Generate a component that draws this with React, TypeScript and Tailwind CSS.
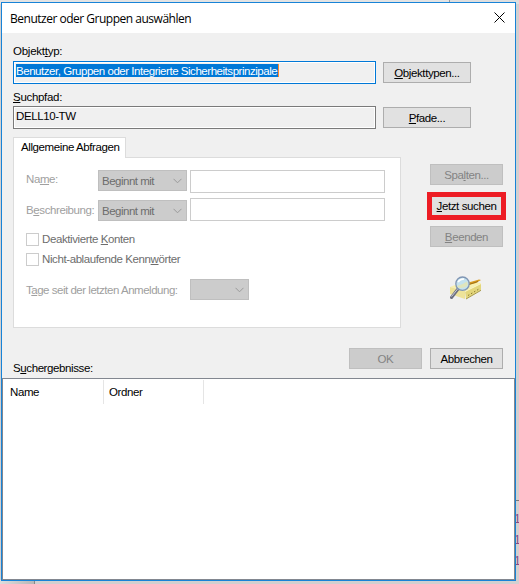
import React from 'react';
import clsx from 'clsx';

interface ButtonProps {
  children: React.ReactNode;
  disabled?: boolean;
  className?: string;
}

function Button({ children, disabled, className }: ButtonProps) {
  return (
    <button
      disabled={disabled}
      className={clsx(
        'flex items-center justify-center h-[21px] border whitespace-nowrap',
        disabled ? 'bg-[#cccccc] border-[#bfbfbf] text-[#838383]' : 'bg-[#e1e1e1] border-[#adadad] text-black',
        className
      )}
    >
      {children}
    </button>
  );
}

// Underlined access key
function Key({ children }: { children: React.ReactNode }) {
  return <span className="underline decoration-1 underline-offset-[1px] [text-decoration-skip-ink:none]">{children}</span>;
}

function Combo({ label, className }: { label?: string; className?: string }) {
  return (
    <div
      className={clsx(
        'flex items-center justify-between h-[21px] pl-[3px] pr-1 bg-[#cccccc] border border-[#bfbfbf] text-[#6d6d6d] tracking-[-0.5px]',
        className
      )}
    >
      <span className="pt-px">{label}</span>
      <svg width="9" height="6" viewBox="0 0 9 6" fill="none" stroke="#9a9a9a">
        <path d="M0.5 0.8L4.5 4.8L8.5 0.8" />
      </svg>
    </div>
  );
}

function Check({ children }: { children: React.ReactNode }) {
  return (
    <label className="flex items-center h-5 text-[#6d6d6d]">
      <span className="w-[13px] h-[13px] mr-[3px] bg-white border border-[#cccccc]" />
      <span className="pt-px">{children}</span>
    </label>
  );
}

function SearchIcon() {
  return (
    <svg width="32" height="24" viewBox="0 0 32 24">
      <path d="M0 11L15 5L31 7L15 15Z" fill="#f8f0ae" />
      <path d="M0 11L15 15V23L0 18Z" fill="#eee39a" />
      <path d="M15 15L31 7V14L16 23Z" fill="#e3d67c" />
      <path d="M15 15.5L31 7.5" stroke="#fdf8cc" />
      <path d="M16 23L31 14.3" stroke="#a89a4c" />
      <path d="M18 19.5L29 13" stroke="#8c7a2e" strokeDasharray="1.5 2" />
      <path d="M17 7L29 3.5L31 4L26 7L18 9Z" fill="#d99b20" />
      <path d="M19 8.5L28 5.5" stroke="#8f6413" strokeWidth="0.8" />
      <path d="M8 13L1.5 21.5" stroke="#6b6e80" strokeWidth="3" strokeLinecap="round" />
      <path d="M8 12.5L1.5 20.5" stroke="#c9ccd8" />
      <circle cx="12.5" cy="7.7" r="6.7" fill="#c4e2ef" stroke="#8096b4" strokeWidth="1.3" />
      <path d="M7 10Q12 9 17 5.5L18 9Q14 13.5 8 11.5Z" fill="#dfe5bd" />
      <path d="M8 6Q10 3 14 3" fill="none" stroke="#fff" strokeWidth="1.5" />
    </svg>
  );
}

export default function App() {
  return (
    <div className="relative w-[519px] h-[584px] overflow-hidden bg-[#d2d0d0] font-['Liberation_Sans',sans-serif] text-[11.5px] leading-[13px] tracking-[-0.4px] text-black">
      {/* Window behind the dialog */}
      <div className="absolute top-0 left-0 w-[450px] h-1 bg-[#e3e3e3] border-r border-[#999999]" />
      <div className="absolute top-0 left-[450px] right-0 h-1 bg-[#dedede]" />
      <div className="absolute bottom-0 left-0 w-[35px] h-1 bg-linear-to-r from-[#dddddd] to-[#b8b8b8] border-r border-[#888888]" />
      <div className="absolute left-[516px] top-[500px] w-[3px] h-px bg-[#777777]" />
      <div className="absolute left-[514px] top-[513px] text-[#8a4a82] text-[12px] tracking-normal">
        <div className="h-[21px]">1</div>
        <div className="h-[21px]">1</div>
        <div className="h-[21px]">1</div>
      </div>

      <div className="relative flex flex-col ml-px mt-[2px] w-[515px] h-[579px] bg-[#f0f0f0] border border-[#1883d7]">
        <header className="flex shrink-0 items-center justify-between h-[30px] pl-2 pr-[10px] bg-white">
          <h1 className="font-['Open_Sans',sans-serif] text-[12px] tracking-[-0.49px]">Benutzer oder Gruppen auswählen</h1>
          <svg width="11" height="11" viewBox="0 0 11 11" stroke="#000" className="-mt-[2px]">
            <path d="M0.5 0.5L10.5 10.5M10.5 0.5L0.5 10.5" />
          </svg>
        </header>

        <section className="flex flex-col pl-[11px]">
          <div className="h-7 pt-[12px] tracking-[-0.25px]">Objekt<Key>t</Key>yp:</div>
          <div className="flex items-center gap-[7px]">
            <div className="w-[363px] h-[23px] p-[2px] bg-[#f0f0f0] border border-[#0078d7] shadow-[inset_0_0_0_1px_#fff]">
              <span className="block w-[263px] h-[13px] leading-[14px] bg-[#0078d7] border-r border-[#ff8728] text-white tracking-[-0.46px] whitespace-nowrap">
                Benutzer, Gruppen oder Integrierte Sicherheitsprinzipale
              </span>
            </div>
            <Button className="w-[88px]"><span className="pt-px"><Key>O</Key>bjekttypen...</span></Button>
          </div>
          <div className="h-[22px] pt-[7px] tracking-[-0.3px]"><Key>S</Key>uchpfad:</div>
          <div className="flex items-center gap-[7px]">
            <div className="w-[363px] h-[23px] p-[2px] bg-[#f0f0f0] border border-[#7a7a7a] shadow-[inset_0_0_0_1px_#fff] leading-[14px]">DELL10-TW</div>
            <Button className="w-[88px]"><span className="pt-px"><Key>P</Key>fade...</span></Button>
          </div>
        </section>

        <section className="flex pl-[11px] pt-2">
          <div className="w-[388px]">
            <div className="relative z-10 w-[113px] h-[21px] pl-[7px] pt-[3px] bg-white border border-b-0 border-[#dcdcdc]">
              Allgemeine Abfragen
            </div>
            <div className="-mt-px h-[171px] pl-3 pt-3 bg-white border border-[#dcdcdc] text-[#a0a0a0]">
              <div className="flex items-start">
                <div className="w-[72px] pt-[3px]">Na<Key>m</Key>e:</div>
                <Combo label="Beginnt mit" className="w-[89px]" />
                <div className="ml-[3px] w-[195px] h-[23px] bg-white border border-[#cccccc]" />
              </div>
              <div className="flex items-end mt-[5px]">
                <div className="w-[72px] pb-1 whitespace-nowrap">B<Key>e</Key>schreibung:</div>
                <Combo label="Beginnt mit" className="w-[89px]" />
                <div className="ml-[3px] w-[195px] h-[23px] bg-white border border-[#cccccc]" />
              </div>
              <div className="mt-2">
                <Check>Deaktivierte <Key>K</Key>onten</Check>
                <Check>Nicht-ablaufende Kenn<Key>w</Key>örter</Check>
              </div>
              <div className="flex items-center mt-[10px]">
                <div className="w-[164px] pt-px tracking-[-0.48px] whitespace-nowrap">T<Key>a</Key>ge seit der letzten Anmeldung:</div>
                <Combo className="w-[59px]" />
              </div>
            </div>
          </div>
          <div className="flex flex-col items-center ml-[26px] pt-[27px] w-[79px]">
            <Button disabled className="w-[73px]"><span className="pt-px">Spa<Key>l</Key>ten...</span></Button>
            <div className="mt-[7px] flex items-center justify-center w-[79px] h-7 border-[5px] border-[#ed1c24] bg-[#e1e1e1] whitespace-nowrap">
              <span><Key>J</Key>etzt suchen</span>
            </div>
            <Button disabled className="mt-[6px] w-[73px]"><span className="pt-px"><Key>B</Key>eenden</span></Button>
            <div className="mt-[29px] mr-[2px]"><SearchIcon /></div>
          </div>
        </section>

        <section className="flex h-[50px] shrink-0 pl-[11px] pt-5">
          <div className="w-[336px] pt-[14px]">S<Key>u</Key>chergebnisse:</div>
          <div className="flex gap-2">
            <Button disabled className="w-[73px]"><span className="pt-px">OK</span></Button>
            <Button className="w-[73px]"><span className="pt-px">Abbrechen</span></Button>
          </div>
        </section>

        <section className="flex-1 bg-white border border-[#828790]">
          <div className="flex h-[25px] pt-px">
            <div className="w-[101px] pl-[7px] pt-[6px] border-r border-[#e5e5e5]">Name</div>
            <div className="w-[100px] pl-[5px] pt-[6px] border-r border-[#e5e5e5]">Ordner</div>
          </div>
        </section>
      </div>
    </div>
  );
}
